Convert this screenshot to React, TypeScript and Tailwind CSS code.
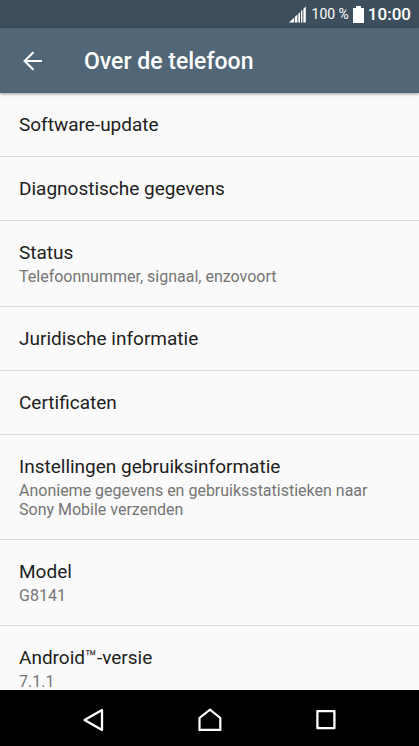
import React from 'react';

interface SettingsItem {
  title: string;
  summary?: string;
}

const items: SettingsItem[] = [
  { title: 'Software-update' },
  { title: 'Diagnostische gegevens' },
  { title: 'Status', summary: 'Telefoonnummer, signaal, enzovoort' },
  { title: 'Juridische informatie' },
  { title: 'Certificaten' },
  {
    title: 'Instellingen gebruiksinformatie',
    summary: 'Anonieme gegevens en gebruiksstatistieken naar Sony Mobile verzenden',
  },
  { title: 'Model', summary: 'G8141' },
  { title: 'Android™-versie', summary: '7.1.1' },
];

const StatusBar = () => (
  <div className="flex h-7 shrink-0 items-center justify-end bg-[#3d4f5c] pr-2 text-white">
    <svg width="17" height="17" viewBox="0 0 17 17" fill="#fff" aria-hidden="true">
      <path d="M0 16.5 L5 11.8 V16.5 Z M5.8 11 L8.4 8.6 V16.5 H5.8 Z M9.3 7.8 L11 6.2 V16.5 H9.3 Z M12 5.2 L13.4 3.8 V16.5 H12 Z M14.4 2.8 L16.8 0.5 V16.5 H14.4 Z" />
    </svg>
    <span className="ml-1.5 text-sm">100 %</span>
    <svg className="ml-1" width="11" height="17" viewBox="0 0 11 17" fill="#fff" aria-hidden="true">
      <path d="M3 0h5v2h3v15H0V2h3z" />
    </svg>
    <span className="ml-1 pt-0.5 text-[17px] font-medium">10:00</span>
  </div>
);

const Header = () => (
  <header className="z-10 flex h-[65px] shrink-0 items-center bg-[#516777] pl-5 text-white shadow-[0_1px_3px_rgba(0,0,0,0.4)]">
    <button type="button" aria-label="Terug" className="flex size-6 items-center justify-center">
      <svg width="20" height="20" viewBox="0 0 20 20" fill="none" stroke="#fff" strokeWidth="2">
        <path d="M20 10H3M11.4 1.2L2.6 10l8.8 8.8" />
      </svg>
    </button>
    <h1 className="ml-10 pt-1 text-[23px] font-medium">Over de telefoon</h1>
  </header>
);

const NavigationBar = () => (
  <nav className="flex h-14 shrink-0 items-center justify-center gap-[92px] bg-black pt-1">
    <button type="button" aria-label="Vorige" className="flex size-6 items-center justify-center">
      <svg width="24" height="24" viewBox="0 0 24 24" fill="none" stroke="#fff" strokeWidth="2.3" strokeLinejoin="round">
        <path d="M20 2v20L2.6 12z" />
      </svg>
    </button>
    <button type="button" aria-label="Startscherm" className="flex size-6 items-center justify-center">
      <svg width="24" height="24" viewBox="0 0 24 24" fill="none" stroke="#fff" strokeWidth="2.2">
        <path d="M1.5 21.8V10L12 1.6l10.3 8.4v11.8z" />
      </svg>
    </button>
    <button type="button" aria-label="Recente apps" className="flex size-6 items-center justify-center">
      <svg width="24" height="24" viewBox="0 0 24 24" fill="none" stroke="#fff" strokeWidth="2.3" strokeLinejoin="round">
        <rect x="3.4" y="3.2" width="17" height="17" />
      </svg>
    </button>
  </nav>
);

const App = () => {
  return (
    <div className="flex h-screen flex-col bg-[#fafafa] font-['Roboto',sans-serif]">
      <StatusBar />
      <Header />
      <main className="min-h-0 flex-1 overflow-hidden">
        <ul>
          {items.map((item) => (
            <li key={item.title} className="border-t border-[#dcdcdc] first:border-t-0">
              <button type="button" className="block w-full px-[19px] py-5 text-left">
                <span className="block text-[19px] leading-[23px] text-[#212121]">{item.title}</span>
                {item.summary && (
                  <span className="mt-[3px] block text-base leading-[19px] text-[#757575]">
                    {item.summary}
                  </span>
                )}
              </button>
            </li>
          ))}
        </ul>
      </main>
      <NavigationBar />
    </div>
  );
};

export default App;
